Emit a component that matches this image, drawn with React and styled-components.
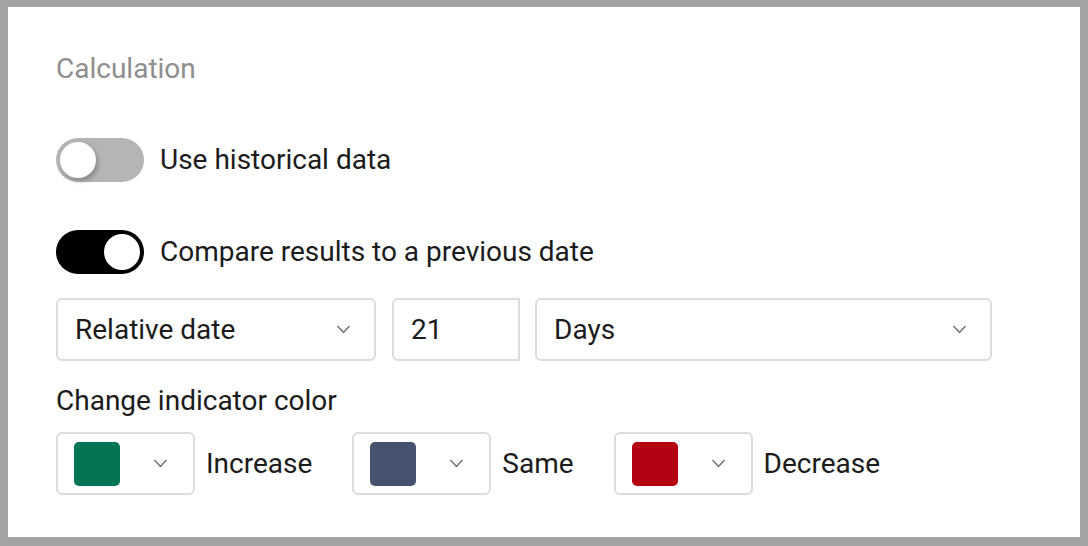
import React from "react";
import styled, { createGlobalStyle } from "styled-components";

const GlobalStyle = createGlobalStyle`
  html, body {
    margin: 0;
    padding: 0;
    background: #a3a3a3;
  }
  body {
    font-family: Roboto, "Noto Sans", Arial, sans-serif;
  }
`;

const Frame = styled.div`
  width: 1088px;
  height: 546px;
  box-sizing: border-box;
  padding: 7px 8px 9px 8px;
`;

const Panel = styled.section`
  height: 100%;
  box-sizing: border-box;
  background: #fff;
  padding: 46px 48px 0 48px;
  display: flex;
  flex-direction: column;
  color: #1b1b1b;
`;

const Heading = styled.h2`
  margin: 0 0 53px 0;
  font-size: 28px;
  font-weight: 400;
  line-height: 32px;
  color: #8e8e8e;
`;

const ToggleRow = styled.label`
  display: flex;
  align-items: center;
  gap: 16px;
  height: 44px;
  margin-bottom: ${(p) => p.$mb}px;
  font-size: 28px;
  line-height: 32px;
`;

const Track = styled.span`
  position: relative;
  width: 88px;
  height: 44px;
  border-radius: 22px;
  background: ${(p) => (p.$on ? "#000" : "#b5b5b5")};
  flex: none;
`;

const Knob = styled.span`
  position: absolute;
  top: 4px;
  left: ${(p) => (p.$on ? "48px" : "4px")};
  width: 36px;
  height: 36px;
  border-radius: 50%;
  background: #fff;
  box-shadow: ${(p) => (p.$on ? "none" : "2px 3px 5px rgba(0,0,0,0.25)")};
`;

const Toggle = ({ on, label, mb }) => (
  <ToggleRow $mb={mb}>
    <Track $on={on}>
      <Knob $on={on} />
    </Track>
    {label}
  </ToggleRow>
);

const FieldRow = styled.div`
  display: flex;
  align-items: center;
  height: 63px;
`;

const Box = styled.div`
  box-sizing: border-box;
  height: 63px;
  width: ${(p) => p.$w}px;
  margin-right: ${(p) => p.$mr || 0}px;
  border: 2px solid #dcdcdc;
  border-radius: ${(p) => (p.$square ? "6px 0 0 6px" : "6px")};
  display: flex;
  align-items: center;
  justify-content: space-between;
  padding: 0 23px 0 17px;
  font-size: 28px;
  color: #1b1b1b;
  background: #fff;
  flex: none;
`;

const Chevron = () => (
  <svg width="15" height="9" viewBox="0 0 15 9" fill="none">
    <polyline
      points="1.5,1 7.5,7.5 13.5,1"
      stroke="#6a6a6a"
      strokeWidth="1.3"
      strokeLinejoin="round"
    />
  </svg>
);

const Label = styled.div`
  font-size: 28px;
  line-height: 32px;
  margin: 24px 0 15px 0;
`;

const ColorRow = styled.div`
  display: flex;
  align-items: center;
  gap: 40px;
`;

const ColorItem = styled.div`
  display: flex;
  align-items: center;
  gap: 11px;
  font-size: 28px;
`;

const ColorButton = styled.div`
  box-sizing: border-box;
  width: 139px;
  height: 63px;
  border: 2px solid #dcdcdc;
  border-radius: 6px;
  display: flex;
  align-items: center;
  justify-content: space-between;
  padding: 0 25px 0 16px;
`;

const Swatch = styled.span`
  width: 46px;
  height: 44px;
  border-radius: 5px;
  background: ${(p) => p.$color};
`;

const colors = [
  { name: "Increase", color: "#047554" },
  { name: "Same", color: "#46536f" },
  { name: "Decrease", color: "#b40215" },
];

export default function App() {
  return (
    <>
      <GlobalStyle />
      <Frame>
        <Panel>
          <Heading>Calculation</Heading>
          <Toggle on={false} label="Use historical data" mb={48} />
          <Toggle on label="Compare results to a previous date" mb={24} />
          <FieldRow>
            <Box $w={320} $mr={16}>
              Relative date
              <Chevron />
            </Box>
            <Box $w={128} $mr={15} $square>
              21
            </Box>
            <Box $w={457}>
              Days
              <Chevron />
            </Box>
          </FieldRow>
          <Label>Change indicator color</Label>
          <ColorRow>
            {colors.map((c) => (
              <ColorItem key={c.name}>
                <ColorButton>
                  <Swatch $color={c.color} />
                  <Chevron />
                </ColorButton>
                {c.name}
              </ColorItem>
            ))}
          </ColorRow>
        </Panel>
      </Frame>
    </>
  );
}
